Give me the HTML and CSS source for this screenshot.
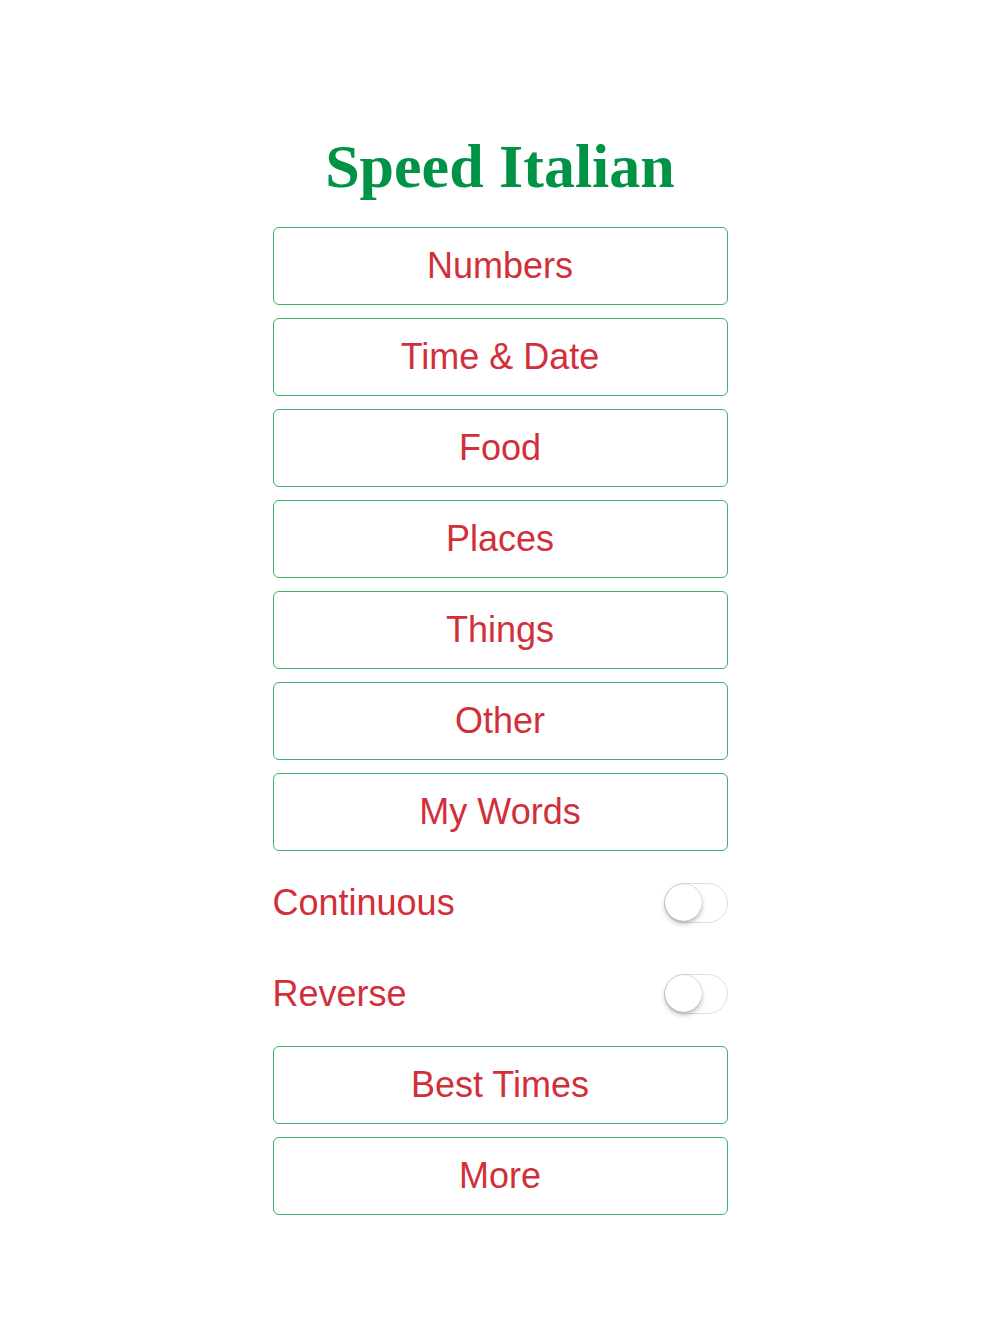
FILE: index.html
```html
<!DOCTYPE html>
<html lang="en">
<head>
<meta charset="utf-8">
<title>Speed Italian</title>
<link rel="stylesheet" href="styles.css">
</head>
<body>
<main class="menu">
  <h1 class="title">Speed Italian</h1>
  <button class="btn">Numbers</button>
  <button class="btn">Time &amp; Date</button>
  <button class="btn">Food</button>
  <button class="btn">Places</button>
  <button class="btn">Things</button>
  <button class="btn">Other</button>
  <button class="btn">My Words</button>
  <div class="row">
    <span class="label">Continuous</span>
    <span class="switch"><span class="knob"></span></span>
  </div>
  <div class="row">
    <span class="label">Reverse</span>
    <span class="switch"><span class="knob"></span></span>
  </div>
  <button class="btn">Best Times</button>
  <button class="btn">More</button>
</main>
</body>
</html>
```
FILE: styles.css
```css
html, body {
  margin: 0;
  padding: 0;
  background: #ffffff;
}

.menu {
  width: 455px;
  margin: 0 auto;
  padding-top: 131px;
  display: flex;
  flex-direction: column;
  gap: 13px;
}

.title {
  margin: 0;
  font-family: "Liberation Serif", "Times New Roman", serif;
  font-weight: bold;
  font-size: 62px;
  line-height: 70px;
  height: 83px;
  color: #009245;
  text-align: center;
}

.btn {
  display: block;
  box-sizing: border-box;
  height: 78px;
  width: 100%;
  margin: 0;
  padding: 0;
  background: #ffffff;
  border: 1.5px solid #3eb06a;
  border-radius: 6px;
  font-family: "Liberation Sans", Arial, sans-serif;
  font-size: 36px;
  color: #d12f3a;
  text-align: center;
}

.row {
  height: 78px;
  display: flex;
  align-items: center;
  justify-content: space-between;
}

.label {
  font-family: "Liberation Sans", Arial, sans-serif;
  font-size: 36px;
  color: #d12f3a;
}

.switch {
  position: relative;
  box-sizing: border-box;
  width: 64px;
  height: 40px;
  border: 1.5px solid #dedede;
  border-radius: 20px;
  background: #ffffff;
}

.knob {
  position: absolute;
  left: 0;
  top: 0;
  width: 37px;
  height: 37px;
  border-radius: 50%;
  background: #ffffff;
  box-shadow: 0 3px 5px rgba(0, 0, 0, 0.25), 0 0 1px rgba(0, 0, 0, 0.4);
}
```
